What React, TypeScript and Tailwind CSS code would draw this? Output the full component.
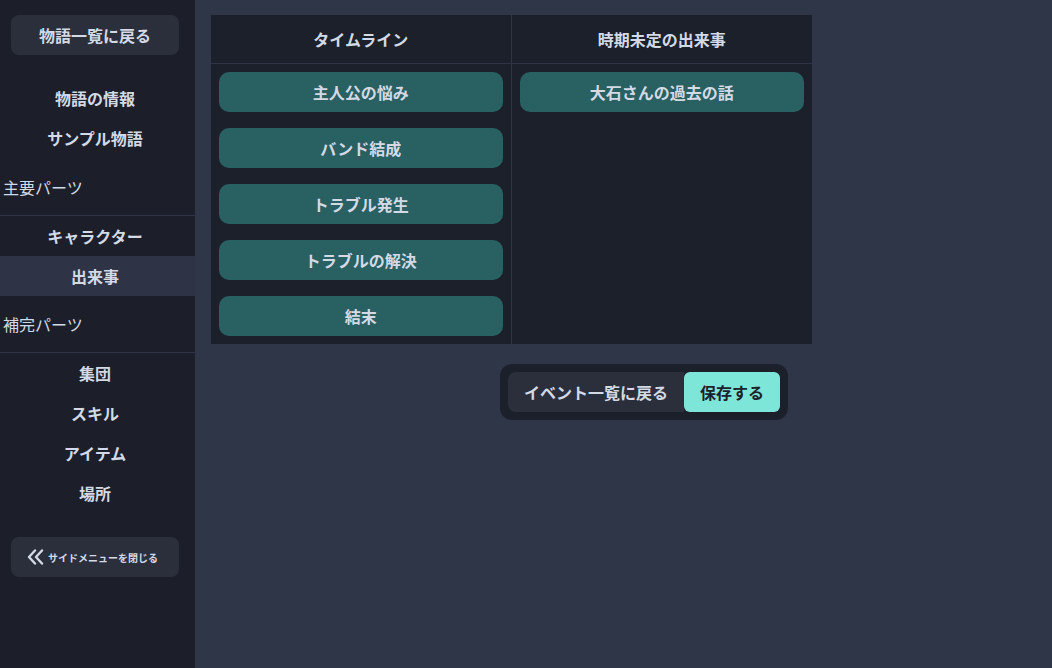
import React from 'react';

const timeline = ['主人公の悩み', 'バンド結成', 'トラブル発生', 'トラブルの解決', '結末'];
const undated = ['大石さんの過去の話'];

const SideItem: React.FC<{ label: string; active?: boolean }> = ({ label, active }) => (
  <div
    className={`h-10 flex items-center justify-center pr-[5px] text-base font-bold text-[#d3dae6] ${
      active ? 'bg-[#2e3446]' : ''
    }`}
  >
    {label}
  </div>
);

const SideHeading: React.FC<{ label: string }> = ({ label }) => (
  <div className="py-4 pl-[3px] border-b border-[#2e3446] text-base leading-6 text-[#d3dae6]">{label}</div>
);

const EventCard: React.FC<{ label: string }> = ({ label }) => (
  <div className="h-10 rounded-[10px] bg-[#296062] flex items-center justify-center text-base font-bold text-[#d3dae6]">
    {label}
  </div>
);

export default function App() {
  return (
    <div
      className="flex h-[668px] w-full bg-[#2e3647] overflow-hidden"
      style={{ fontFamily: '"Noto Sans CJK JP", "Noto Sans", sans-serif' }}
    >
      {/* Sidebar */}
      <aside className="w-[195px] shrink-0 bg-[#1c1f2a] flex flex-col pt-[15px]">
        <div className="pl-[11px] pr-4">
          <button className="w-full h-10 rounded-lg bg-[#2b2f3b] text-base font-bold text-[#d3dae6]">
            物語一覧に戻る
          </button>
        </div>
        <div className="mt-6 -translate-y-px">
          <SideItem label="物語の情報" />
          <SideItem label="サンプル物語" />
        </div>
        <SideHeading label="主要パーツ" />
        <SideItem label="キャラクター" />
        <SideItem label="出来事" active />
        <SideHeading label="補完パーツ" />
        <SideItem label="集団" />
        <SideItem label="スキル" />
        <SideItem label="アイテム" />
        <SideItem label="場所" />
        <div className="pl-[11px] pr-4 mt-6">
          <button className="w-full h-10 rounded-lg bg-[#2b2f3b] flex items-center pl-4 gap-[4px] text-[#d3dae6]">
            <svg width="17" height="16" viewBox="0 0 17 16" fill="none" stroke="currentColor" strokeWidth="2.4" strokeLinecap="round" strokeLinejoin="round">
              <path d="M8 1.5 L2 8 L8 14.5" />
              <path d="M15 1.5 L9 8 L15 14.5" />
            </svg>
            <span className="text-[10px] font-bold">サイドメニューを閉じる</span>
          </button>
        </div>
      </aside>

      {/* Main */}
      <main className="flex-1 pt-[15px] pl-4">
        <div className="w-[601px] grid grid-cols-2 bg-[#1c202b]">
          <div className="border-r border-[#2e3446] flex flex-col">
            <div className="h-[49px] border-b border-[#2e3446] flex items-center justify-center text-base font-bold text-[#d3dae6]">
              タイムライン
            </div>
            <div className="flex flex-col gap-4 p-2">
              {timeline.map((t) => (
                <EventCard key={t} label={t} />
              ))}
            </div>
          </div>
          <div className="flex flex-col">
            <div className="h-[49px] border-b border-[#2e3446] flex items-center justify-center text-base font-bold text-[#d3dae6]">
              時期未定の出来事
            </div>
            <div className="flex flex-col gap-4 p-2">
              {undated.map((t) => (
                <EventCard key={t} label={t} />
              ))}
            </div>
          </div>
        </div>

        <div className="mt-5 ml-[289px] inline-flex p-2 rounded-xl bg-[#1c202b]">
          <button className="h-10 w-[176px] rounded-l-lg bg-[#2b2f3b] text-base font-bold text-[#d3dae6]">
            イベント一覧に戻る
          </button>
          <button className="h-10 w-24 rounded-md bg-[#7ee6d8] text-base font-bold text-[#1c202b]">
            保存する
          </button>
        </div>
      </main>
    </div>
  );
}
